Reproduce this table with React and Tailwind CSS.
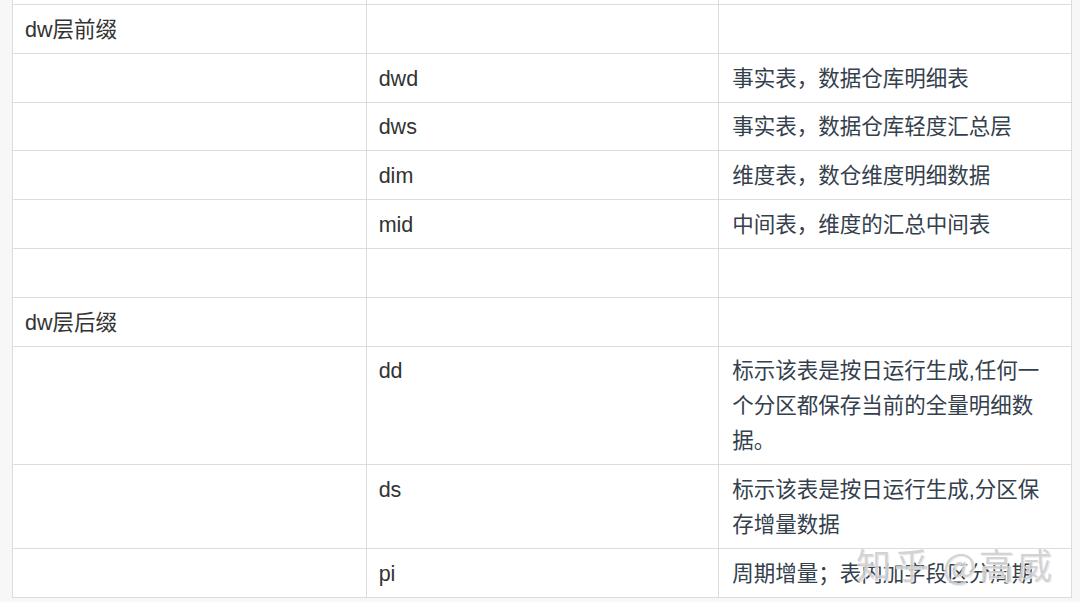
import React from "react";

const rows = [
  { a: "dw层前缀", b: "", c: null },
  { a: "", b: "dwd", c: ["事实表，数据仓库明细表"] },
  { a: "", b: "dws", c: ["事实表，数据仓库轻度汇总层"] },
  { a: "", b: "dim", c: ["维度表，数仓维度明细数据"] },
  { a: "", b: "mid", c: ["中间表，维度的汇总中间表"] },
  { a: "", b: "", c: null },
  { a: "dw层后缀", b: "", c: null },
  { a: "", b: "dd", c: ["标示该表是按日运行生成,任何一", "个分区都保存当前的全量明细数", "据。"] },
  { a: "", b: "ds", c: ["标示该表是按日运行生成,分区保", "存增量数据"] },
  { a: "", b: "pi", c: ["周期增量；表内加字段区分周期"] },
];

export default function App() {
  return (
    <div
      className="relative h-[602px] w-[1080px] overflow-hidden bg-[#f7f7f7]"
      style={{ fontFamily: '"Liberation Sans", "Noto Sans CJK SC", sans-serif' }}
    >
      <div className="ml-[12px] w-[1060px] border-x border-b border-[#dcdcdc] bg-white">
        <div className="grid h-[5px] grid-cols-3 border-b border-[#dcdcdc]">
          <div />
          <div className="border-l border-[#dcdcdc]" />
          <div className="border-l border-[#dcdcdc]" />
        </div>
        {rows.map((r, i) => (
          <div
            key={i}
            className={`grid grid-cols-3 text-[21.5px] leading-[35px] ${
              i < rows.length - 1 ? "border-b border-[#dcdcdc]" : ""
            }`}
          >
            <div className="min-h-[47.8px] pt-[7.8px] pb-[5px] pl-[12px] text-[#333333]">{r.a}</div>
            <div className="border-l border-[#dcdcdc] pt-[7.8px] pb-[5px] pl-[12px] text-[#333333]">{r.b}</div>
            <div className="border-l border-[#dcdcdc] pt-[7.8px] pb-[5px] pl-[13px] text-[#34404c] whitespace-nowrap">
              {r.c &&
                r.c.map((line, j) => (
                  <div key={j}>{line}</div>
                ))}
            </div>
          </div>
        ))}
      </div>
      <div
        className="absolute left-[856px] top-[542px] text-[35px] leading-[44px] tracking-[3px] text-[#cfcfcf] opacity-90 whitespace-nowrap"
        style={{ fontFamily: '"Noto Sans CJK SC", sans-serif', textShadow: "0 0 1px #ffffff, 1px 1px 0 #e8e8e8" }}
      >
        知乎 @高威
      </div>
    </div>
  );
}
